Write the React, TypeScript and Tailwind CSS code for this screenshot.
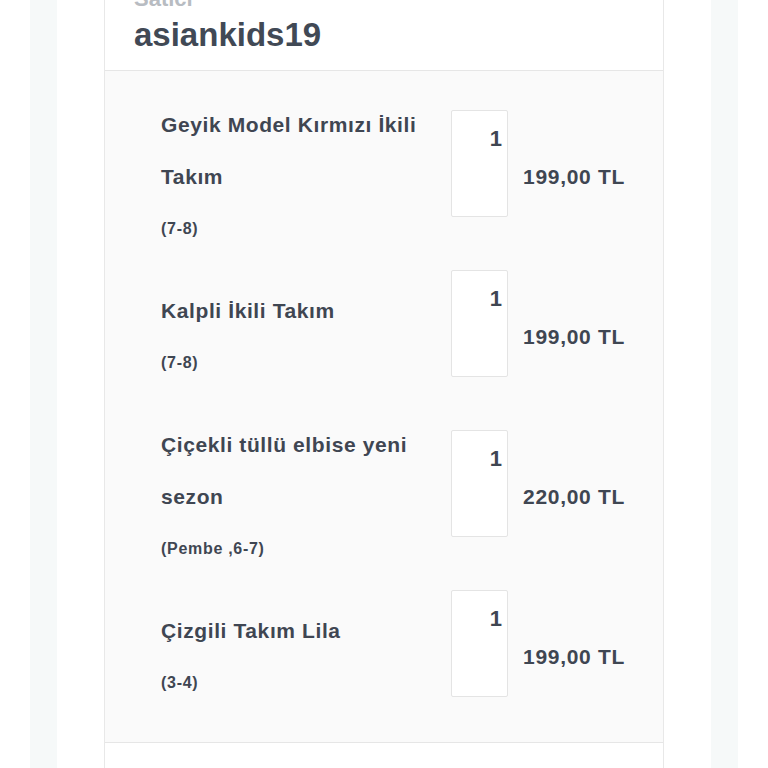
import React from 'react';

interface CartItem {
  title: string;
  variant: string;
  qty: number;
  price: string;
}

const items: CartItem[] = [
  { title: 'Geyik Model Kırmızı İkili Takım', variant: '(7-8)', qty: 1, price: '199,00 TL' },
  { title: 'Kalpli İkili Takım', variant: '(7-8)', qty: 1, price: '199,00 TL' },
  { title: 'Çiçekli tüllü elbise yeni sezon', variant: '(Pembe ,6-7)', qty: 1, price: '220,00 TL' },
  { title: 'Çizgili Takım Lila', variant: '(3-4)', qty: 1, price: '199,00 TL' },
];

const CartRow: React.FC<{ item: CartItem }> = ({ item }) => (
  <div className="flex h-[160px] items-center">
    <div className="w-[272px] mr-[18px] flex flex-col justify-center">
      <p className="text-[21px] leading-[52px] font-bold tracking-[0.6px] text-[#3f4652]">
        {item.title}
      </p>
      <p className="text-[16px] leading-[52px] font-bold tracking-[0.7px] text-[#3f4652]">
        {item.variant}
      </p>
    </div>
    <div className="self-start mt-[13px] w-[57px] h-[107px] bg-white border border-[#e4e4e4] rounded-[2px] flex justify-end pr-[5px] pt-[13px]">
      <span className="text-[22px] leading-[30px] font-bold text-[#3f4652]">{item.qty}</span>
    </div>
    <div className="ml-[15px] text-[21px] font-bold tracking-[0.7px] text-[#3f4652]">
      {item.price}
    </div>
  </div>
);

export default function App() {
  return (
    <div
      className="h-[768px] overflow-hidden bg-white px-[30px]"
      style={{ fontFamily: '"Liberation Sans", Arial, sans-serif' }}
    >
      <div className="h-full bg-[#f6f9f9] px-[27px]">
        <div className="h-full bg-white px-[47px]">
          <div className="h-full overflow-hidden border-x border-[#e8e8e8]">
            <div className="-mt-[15px] pl-[29px] pb-[13px] border-b border-[#e6e6e6]">
              <div className="text-[22px] leading-[28px] font-bold text-[#b8bcc2]">Satıcı</div>
              <div className="text-[33px] leading-[44px] font-bold text-[#414955]">asiankids19</div>
            </div>
            <div className="bg-[#fafafa] pl-[56px] pr-[30px] pt-[26px] pb-[5px] border-b border-[#e6e6e6]">
              {items.map((item, i) => (
                <CartRow key={i} item={item} />
              ))}
            </div>
            <div className="bg-white pt-[20px] flex pl-[158px] text-[18px] font-bold text-[#d0d3d7]">
              <span className="w-[216px]">Ara Toplam</span>
              <span>817,00 TL</span>
            </div>
          </div>
        </div>
      </div>
    </div>
  );
}
